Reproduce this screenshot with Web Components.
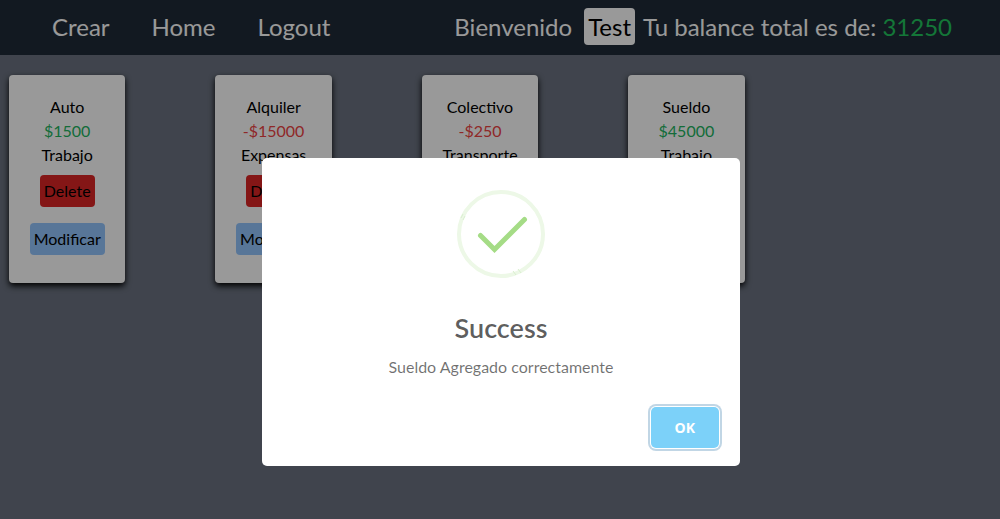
<!DOCTYPE html>
<html lang="es">
<head>
<meta charset="utf-8">
<meta name="viewport" content="width=device-width, initial-scale=1">
<title>Balance</title>
<style>
  body { margin: 0; min-height: 100vh; background: #6b7280; color: #000; font: 16px/24px Lato, sans-serif; }
</style>
</head>
<body>
<nav-bar user="Test" balance="31250"></nav-bar>
<card-list>
  <money-card name="Auto" amount="1500" category="Trabajo"></money-card>
  <money-card name="Alquiler" amount="-15000" category="Expensas"></money-card>
  <money-card name="Colectivo" amount="-250" category="Transporte"></money-card>
  <money-card name="Sueldo" amount="45000" category="Trabajo"></money-card>
</card-list>
<alert-dialog>
  <span slot="title">Success</span>
  <span slot="text">Sueldo Agregado correctamente</span>
</alert-dialog>

<template id="nav-bar">
  <style>
    :host { display: block; background: #1f2b37; color: #fff; font-size: 24px; line-height: 37px; }
    header { display: flex; justify-content: space-between; align-items: center; padding: 8px 48px 10px 52px; }
    nav { display: flex; gap: 42px; }
    a { color: inherit; text-decoration: none; }
    .status { display: flex; white-space: pre; }
    .user { background: #fff; color: #000; border-radius: 4px; padding: 0 4px; margin: 0 8px 0 12px; }
    .total { color: #22c55e; }
  </style>
  <header>
    <nav><a href="#crear">Crear</a><a href="#home">Home</a><a href="#logout">Logout</a></nav>
    <div class="status"><span>Bienvenido</span><span class="user"></span><span>Tu balance total es de: <span class="total"></span></span></div>
  </header>
</template>

<template id="card-list">
  <style>
    :host { display: grid; grid-template-columns: repeat(5, minmax(0, 1fr)); gap: 20px 90px; padding: 20px 49px 20px 9px; }
  </style>
  <slot></slot>
</template>

<template id="money-card">
  <style>
    :host { display: flex; flex-direction: column; align-items: center; padding: 20px 0 28px; background: #fff; border-radius: 4px; box-shadow: 0 3px 6px #000; }
    p { margin: 0; }
    .amount { color: #22b560; }
    .amount.negative { color: #ef4444; }
    button { font: inherit; color: #000; border: 0; border-radius: 4px; padding: 4px; }
    .delete { background: #dc2626; margin: 8px 0 16px; }
    .edit { background: #93c5fd; }
  </style>
  <p class="name"></p>
  <p class="amount"></p>
  <p class="category"></p>
  <button class="delete" type="button">Delete</button>
  <button class="edit" type="button">Modificar</button>
</template>

<template id="alert-dialog">
  <style>
    :host { position: fixed; inset: 0; display: flex; align-items: center; justify-content: center; padding: 105px 0 0 2px; background: rgba(0, 0, 0, .4); box-sizing: border-box; }
    section { width: 478px; max-width: 100%; background: #fff; border-radius: 5px; text-align: center; padding-top: 32px; }
    svg { display: block; margin: 0 auto; }
    h2 { margin: 0; padding: 32px 16px 0; font-size: 27px; line-height: 36px; font-weight: 600; color: rgba(0, 0, 0, .65); }
    p { margin: 0; padding: 9px 16px 0; color: rgba(0, 0, 0, .56); line-height: 24px; }
    footer { display: flex; justify-content: flex-end; padding: 28px 21px 18px; }
    button { background: #7cd1f9; color: #fff; border: 0; border-radius: 5px; padding: 10px 24px; font: 700 14px/21px "Open Sans", sans-serif; outline: 0; box-shadow: 0 0 0 1px #fff, 0 0 0 3px rgba(43, 114, 165, .29); }
  </style>
  <section role="alertdialog" aria-modal="true" aria-labelledby="title" aria-describedby="text">
    <svg width="88" height="88" viewBox="0 0 88 88" fill="none" aria-hidden="true">
      <circle cx="44" cy="44" r="42" stroke="#edf8e7" stroke-width="4"/>
      <path d="M4 28l2-4M6 30l2-4M56 81l3 4M61 79l3 4" stroke="#d9efcf" stroke-width="1"/>
      <path d="M23.500 45.500L37.500 59.500L67.500 29.500" stroke="#a5dc86" stroke-width="5" stroke-linecap="round"/>
    </svg>
    <h2 id="title"><slot name="title"></slot></h2>
    <p id="text"><slot name="text"></slot></p>
    <footer><button type="button">OK</button></footer>
  </section>
</template>

<script>
  class TemplateElement extends HTMLElement {
    constructor() {
      super();
      const template = document.getElementById(this.localName);
      this.attachShadow({ mode: "open" }).append(template.content.cloneNode(true));
    }
    fill(selector, text) {
      const node = this.shadowRoot.querySelector(selector);
      node.textContent = text;
      return node;
    }
  }

  customElements.define("nav-bar", class extends TemplateElement {
    connectedCallback() {
      this.fill(".user", this.getAttribute("user"));
      this.fill(".total", this.getAttribute("balance"));
    }
  });

  customElements.define("card-list", class extends TemplateElement {});

  customElements.define("money-card", class extends TemplateElement {
    connectedCallback() {
      const amount = Number(this.getAttribute("amount"));
      this.fill(".name", this.getAttribute("name"));
      this.fill(".category", this.getAttribute("category"));
      this.fill(".amount", (amount < 0 ? "-$" : "$") + Math.abs(amount)).classList.toggle("negative", amount < 0);
    }
  });

  customElements.define("alert-dialog", class extends TemplateElement {
    connectedCallback() {
      this.shadowRoot.querySelector("button").addEventListener("click", () => this.remove());
    }
  });
</script>
</body>
</html>
